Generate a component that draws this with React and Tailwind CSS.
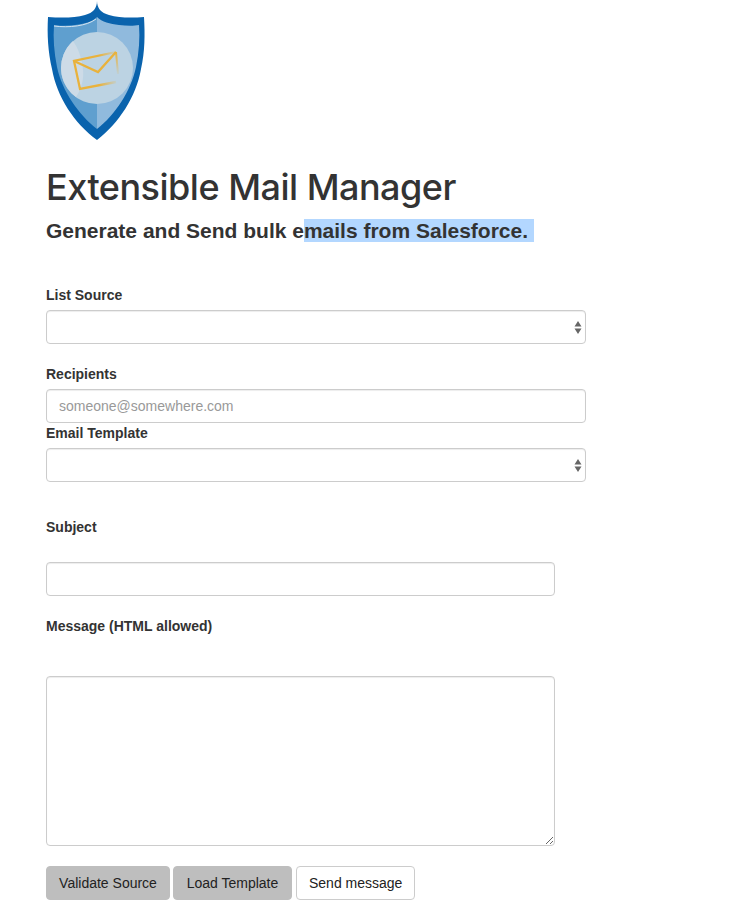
const Logo = () => (
  <svg width="100" height="141" viewBox="0 0 100 141" className="block">
    <defs>
      <linearGradient id="fade" x1="0" x2="1" y1="0" y2="0">
        <stop offset="0" stopColor="#e9b23c" />
        <stop offset="0.6" stopColor="#e9b23c" />
        <stop offset="1" stopColor="#e9b23c" stopOpacity="0.15" />
      </linearGradient>
      <linearGradient id="fadeV" x1="0" x2="0" y1="0" y2="1">
        <stop offset="0" stopColor="#e9b23c" />
        <stop offset="1" stopColor="#e9b23c" stopOpacity="0.1" />
      </linearGradient>
    </defs>
    <path d="M50 1 C50 8 54 13 62 15 C72 18 85 18 97 17 C98 34 98 52 94 69 C89 97 72 123 50 140 C27 123 10 97 5 69 C1 52 0 34 1 17 C14 18 28 18 38 15 C46 13 50 8 50 1Z" fill="#0a63ad" />
    <path d="M50 17 C45 22 37 24 28 25 C20 26 12 26 7 25 C6 38 7 52 10 67 C15 91 32 115 50 129Z" fill="#5f9fcf" />
    <path d="M50 17 C55 22 63 24 72 25 C80 26 87 26 92 25 C93 38 92 52 89 67 C84 91 68 115 50 129Z" fill="#90badd" />
    <path d="M7 26 C22 28 40 26 49 19" stroke="#d6e4f0" strokeWidth="1" fill="none" />
    <circle cx="50" cy="68" r="36" fill="#bcd3e3" />
    <path d="M26 41 A36 36 0 0 0 29 97 C34 90 37 80 36 70 C35 58 31 48 26 41Z" fill="#cddbe7" />
    <path d="M69 52 L27 61 L33 89 L69 82" fill="none" stroke="url(#fade)" strokeWidth="2.3" />
    <path d="M69 52 L71 74" fill="none" stroke="url(#fadeV)" strokeWidth="2" />
    <path d="M27 61 L51 72 L69 52" fill="none" stroke="#e9b23c" strokeWidth="2.3" />
  </svg>
);

const Arrows = () => (
  <svg width="8" height="13" viewBox="0 0 8 13" className="absolute right-[3px] top-[11px] pointer-events-none">
    <path d="M4 0 L7.5 5.5 H0.5Z M0.5 7.5 H7.5 L4 13Z" fill="#666" />
  </svg>
);

const Label = ({ children, className = "" }) => (
  <label className={`block text-[14px] leading-[20px] font-bold text-[#333] ${className}`}>{children}</label>
);

const field = "block h-[34px] rounded-[4px] border border-[#ccc] bg-white px-3 text-[14px] text-[#555] outline-none shadow-[inset_0_1px_1px_rgba(0,0,0,0.075)] placeholder:text-[#999]";

const Select = () => (
  <div className="relative w-[540px]">
    <select className={`${field} w-full appearance-none`}><option></option></select>
    <div className="absolute right-[1px] top-0"><Arrows /></div>
  </div>
);

const btn = "h-[34px] rounded-[4px] border px-3 text-[14px] text-[#222] whitespace-nowrap";

export default function App() {
  return (
    <div className="min-h-[901px] bg-white pl-[46px] font-['Liberation_Sans',Arial,sans-serif] text-[#333]">
      <div className="ml-[1px]"><Logo /></div>
      <h1 className="mt-[26px] font-['Inter',sans-serif] text-[36px] leading-[40px] font-medium tracking-[-0.5px]">Extensible Mail Manager</h1>
      <h3 className="mt-[11px] text-[21px] leading-[25px] font-bold whitespace-pre">
        Generate and Send bulk e<span className="bg-[#b3d7ff]">mails from Salesforce. </span>
      </h3>
      <form>
        <Label className="mt-[42px]">List Source</Label>
        <div className="mt-[5px]"><Select /></div>
        <Label className="mt-[20px]">Recipients</Label>
        <input placeholder="someone@somewhere.com" className={`${field} mt-[5px] w-[540px]`} />
        <Label>Email Template</Label>
        <div className="mt-[5px]"><Select /></div>
        <Label className="mt-[35px]">Subject</Label>
        <input className={`${field} mt-[25px] w-[509px]`} />
        <Label className="mt-[20px]">Message (HTML allowed)</Label>
        <textarea className={`${field} mt-[40px] !h-[170px] w-[509px] py-[6px]`} />
        <div className="mt-[20px] flex gap-[3px]">
          <button type="button" className={`${btn} w-[124px] border-[#bebebe] bg-[#bebebe]`}>Validate Source</button>
          <button type="button" className={`${btn} w-[119px] border-[#bebebe] bg-[#bebebe]`}>Load Template</button>
          <button type="button" className={`${btn} ml-[1px] w-[119px] border-[#ccc] bg-white`}>Send message</button>
        </div>
      </form>
    </div>
  );
}
